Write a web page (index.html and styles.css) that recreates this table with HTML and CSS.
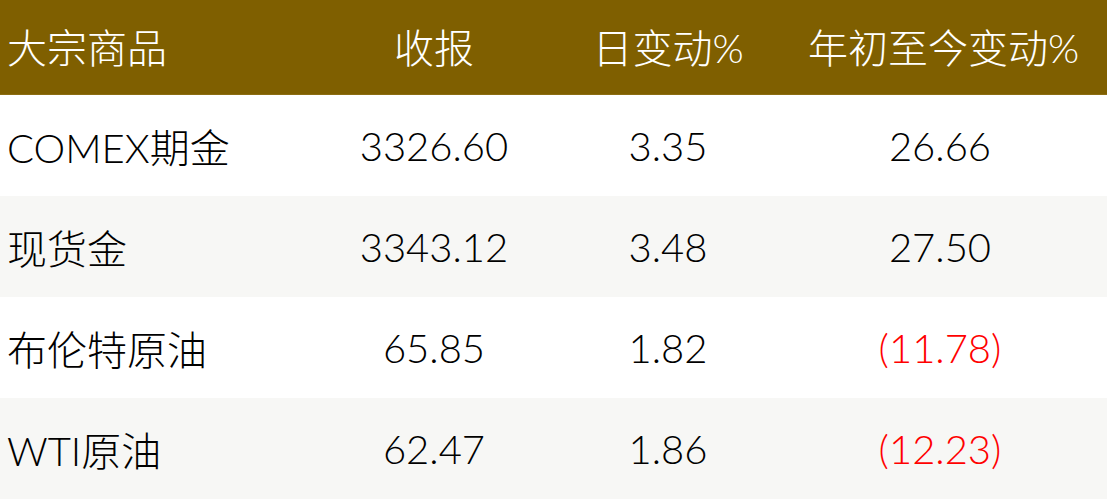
FILE: index.html
```html
<!DOCTYPE html>
<html lang="zh-CN">
<head>
<meta charset="utf-8">
<title>大宗商品</title>
<link rel="stylesheet" href="styles.css">
</head>
<body>
<div class="table">
  <div class="row head">
    <div class="cell name">大宗商品</div>
    <div class="cell">收报</div>
    <div class="cell">日变动%</div>
    <div class="cell">年初至今变动%</div>
  </div>
  <div class="row">
    <div class="cell name">COMEX期金</div>
    <div class="cell">3326.60</div>
    <div class="cell">3.35</div>
    <div class="cell">26.66</div>
  </div>
  <div class="row alt">
    <div class="cell name">现货金</div>
    <div class="cell">3343.12</div>
    <div class="cell">3.48</div>
    <div class="cell">27.50</div>
  </div>
  <div class="row">
    <div class="cell name">布伦特原油</div>
    <div class="cell">65.85</div>
    <div class="cell">1.82</div>
    <div class="cell neg">(11.78)</div>
  </div>
  <div class="row alt">
    <div class="cell name">WTI原油</div>
    <div class="cell">62.47</div>
    <div class="cell">1.86</div>
    <div class="cell neg">(12.23)</div>
  </div>
</div>
</body>
</html>
```

FILE: styles.css
```css
html, body {
  margin: 0;
  padding: 0;
  background: #ffffff;
}

body {
  width: 1107px;
  height: 499px;
  overflow: hidden;
  font-family: "Lato", "Noto Sans CJK SC", sans-serif;
  font-size: 40px;
  font-weight: 300;
  color: #000000;
}

.table {
  display: flex;
  flex-direction: column;
}

.row {
  display: grid;
  grid-template-columns: 340px 188px 280px 264px;
  height: 101px;
  align-items: center;
}

.row.head {
  height: 91px;
  padding-bottom: 3px;
  background: #7f5f00;
  border-bottom: 1px solid #8c6d12;
  color: #ffffff;
}

.row.alt {
  background: #f7f7f5;
}

.cell {
  text-align: center;
  white-space: nowrap;
}

.cell.name {
  text-align: left;
  padding-left: 7px;
}

.cell.neg {
  color: #ff0000;
}
```
